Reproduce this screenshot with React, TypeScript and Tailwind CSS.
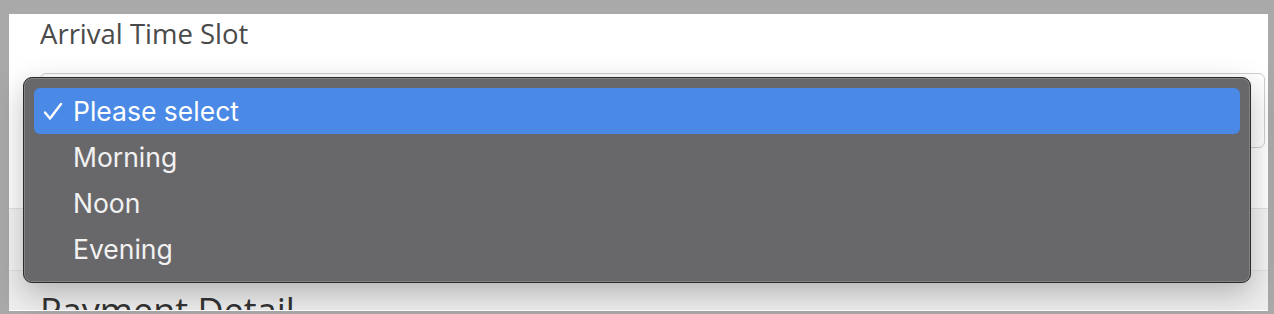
const options = ["Please select", "Morning", "Noon", "Evening"];

const Check = () => (
  <svg width="20" height="19" viewBox="0 0 20 19" fill="none" stroke="currentColor" strokeWidth="2.4" strokeLinecap="round" strokeLinejoin="round">
    <polyline points="2,10.5 7,16.5 18,2" />
  </svg>
);

const SelectMenu = () => {
  return (
    <div className="absolute left-[14px] top-[63px] w-[1228px] h-[206px] rounded-[9px] border border-[#2b2b2d] bg-[#68686b] shadow-[0_10px_30px_rgba(0,0,0,0.25),inset_0_0_0_1px_rgba(255,255,255,0.18)] p-[10px] font-['Inter','Liberation_Sans',sans-serif]">
      {options.map((opt, i) => (
        <div
          key={opt}
          className={`flex items-center h-[46px] rounded-[6px] text-[26.5px] text-[#f2f2f2] ${i === 0 ? "bg-[#4a89e5] text-white" : ""}`}
        >
          <span className="w-[39px] pl-[9px] flex items-center">{i === 0 ? <Check /> : null}</span>
          <span className="leading-none">{opt}</span>
        </div>
      ))}
    </div>
  );
};

export default function App() {
  return (
    <div className="w-[1274px] h-[314px] bg-[#a9a9a9] pt-[14px] pl-[9px] pr-[6px] overflow-hidden">
      <div className="relative bg-white h-[297px] font-['Open_Sans','Liberation_Sans',sans-serif]">
        <div className="pl-[31px] pt-[4px] text-[27.5px] text-[#4a4a4a] leading-[32px]">Arrival Time Slot</div>
        <div className="ml-[31px] mr-[3px] mt-[23px] h-[75px] rounded-[6px] border border-[#cfcfcf] bg-white"></div>
        <div className="mt-[60px] border-t border-[#e2e2e2] h-[62px] bg-[#f4f4f4]"></div>
        <div className="border-t border-[#e2e2e2] bg-[#eeeeee] h-[40px] pl-[31px] pt-[20px] overflow-hidden">
          <div className="text-[36px] text-[#333] leading-[40px]">Payment Detail</div>
        </div>
        <SelectMenu />
      </div>
    </div>
  );
}
